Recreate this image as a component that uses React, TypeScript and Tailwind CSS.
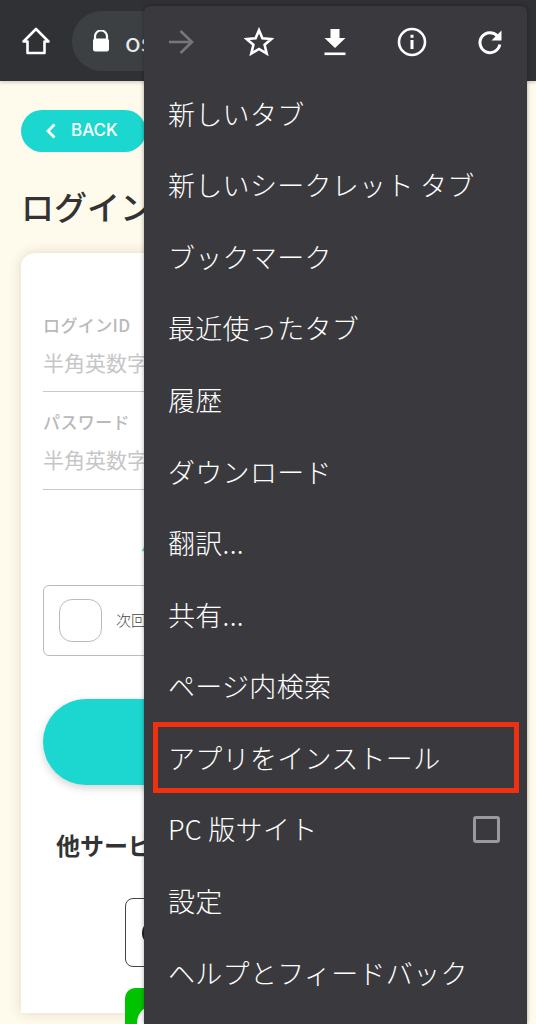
import React from "react";

const FONT = "[font-family:'Noto_Sans_CJK_JP','Noto_Sans',sans-serif]";

function Home() {
  return (
    <svg width="30" height="30" viewBox="0 0 30 30" fill="none" stroke="#fff" strokeWidth="2.6" strokeLinejoin="round" strokeLinecap="round">
      <path d="M15 3 L27.5 15.5 H23.5 V27 H6.5 V15.5 H2.5 Z" />
    </svg>
  );
}
function Lock() {
  return (
    <svg width="18" height="22" viewBox="0 0 18 22">
      <path d="M3 9 V6.5 A6 6 0 0 1 15 6.5 V9" fill="none" stroke="#fff" strokeWidth="2.2" />
      <rect x="1" y="8.5" width="16" height="13" rx="2.5" fill="#fff" />
    </svg>
  );
}
function Arrow() {
  return (
    <svg width="26" height="26" viewBox="0 0 26 26" fill="none" stroke="#77777a" strokeWidth="2.6">
      <path d="M1 13 H23" />
      <path d="M12.5 2 L24 13 L12.5 24" />
    </svg>
  );
}
function Star() {
  return (
    <svg width="30" height="30" viewBox="0 0 30 30" fill="none" stroke="#fff" strokeWidth="2.6" strokeLinejoin="miter">
      <path d="M15 3.2 L18.4 11.3 L27.4 12 L20.6 17.8 L22.7 26.6 L15 21.9 L7.3 26.6 L9.4 17.8 L2.6 12 L11.6 11.3 Z" />
    </svg>
  );
}
function Download() {
  return (
    <svg width="24" height="28" viewBox="0 0 24 28" fill="#fff">
      <path d="M7.5 1 H16.5 V10 H22.5 L12 20 L1.5 10 H7.5 Z" />
      <rect x="1.5" y="24.5" width="21" height="2.6" />
    </svg>
  );
}
function Info() {
  return (
    <svg width="30" height="30" viewBox="0 0 30 30" fill="none">
      <circle cx="15" cy="15" r="13" stroke="#fff" strokeWidth="2.6" />
      <rect x="13.5" y="13" width="3" height="9" fill="#fff" />
      <rect x="13.5" y="7.8" width="3" height="3" fill="#fff" />
    </svg>
  );
}
function Refresh() {
  return (
    <svg width="28" height="28" viewBox="0 0 28 28" fill="none">
      <path d="M21.6 8.2 A10 10 0 1 0 23.8 16.5" stroke="#fff" strokeWidth="3" />
      <path d="M25.5 2.5 V12.5 H15.5 Z" fill="#fff" />
    </svg>
  );
}

const items = [
  "新しいタブ",
  "新しいシークレット タブ",
  "ブックマーク",
  "最近使ったタブ",
  "履歴",
  "ダウンロード",
  "翻訳...",
  "共有...",
  "ページ内検索",
  "アプリをインストール",
  "PC 版サイト",
  "設定",
  "ヘルプとフィードバック",
];

export default function App() {
  return (
    <div className={`relative h-[1024px] w-[536px] overflow-hidden bg-[#fefaec] ${FONT}`}>
      <header className="flex h-[81px] items-center bg-[#303135] pl-[21px] shadow-[0_2px_3px_rgba(0,0,0,0.15)]">
        <Home />
        <div className="ml-[21px] flex h-[60px] w-[200px] items-center rounded-full bg-[#3c4043] pl-[20px]">
          <Lock />
          <span className="ml-[15px] text-[26px] text-[#e8eaed]">osaifu.com</span>
        </div>
      </header>

      <main className="px-[21px] pt-[29px]">
        <button className="flex h-[42px] w-[125px] items-center gap-[15px] rounded-full bg-[#1cd7d0] pl-[25px] text-[17px] font-medium text-white">
          <svg width="10" height="16" viewBox="0 0 10 16" fill="none" stroke="#fff" strokeWidth="2.8">
            <path d="M8.5 1.5 L2 8 L8.5 14.5" />
          </svg>
          <span className="[font-family:'Inter',sans-serif]">BACK</span>
        </button>
        <h1 className="mt-[29px] h-[50px] text-[33px] font-medium leading-[50px] text-[#333]">ログイン</h1>

        <section className="mt-[22px] h-[760px] rounded-t-[14px] bg-white px-[22px] pt-[60px] shadow-[0_0_12px_rgba(120,100,50,0.22)]">
          <p className="text-[17px] font-medium leading-[24px] tracking-[0.4px] text-[#b9b9b9]">ログインID</p>
          <p className="mt-[3px] h-[52px] border-b border-[#c8c8c8] pt-[6px] text-[21px] leading-[32px] text-[#c6c6c6]">半角英数字で入力</p>
          <p className="mt-[18px] text-[17px] font-medium leading-[24px] tracking-[0.4px] text-[#b9b9b9]">パスワード</p>
          <p className="mt-[3px] h-[53px] border-b border-[#c8c8c8] pt-[6px] text-[21px] leading-[32px] text-[#c6c6c6]">半角英数字で入力</p>
          <p className="mt-[41px] h-[26px] text-center text-[17px] leading-[26px] text-[#1cd7d0]">パスワードをお忘れの方はこちら</p>
          <div className="mt-[28px] flex h-[71px] items-center rounded-[6px] border border-[#bbbbbb] pl-[15px]">
            <span className="h-[43px] w-[43px] rounded-[13px] border border-[#bbbbbb]" />
            <span className="ml-[14px] text-[15px] font-light text-[#444]">次回から自動ログイン</span>
          </div>
          <button className="mt-[43px] block h-[86px] w-full rounded-full bg-[#1cd7d0] shadow-[0_3px_8px_rgba(0,0,0,0.18)]" />
          <p className="mt-[42px] pl-[13px] text-[24px] font-bold leading-[36px] text-[#333]">他サービスでログイン</p>
          <div className="ml-[82px] mt-[35px] flex h-[69px] w-[300px] items-center rounded-[8px] border border-[#444] pl-[16px]">
            <span className="h-[26px] w-[26px] rounded-full bg-[#222]" />
          </div>
          <div className="ml-[82px] mt-[21px] flex h-[69px] w-[300px] items-center rounded-[10px] bg-[#00c300] pl-[12px]">
            <span className="h-[36px] w-[36px] rounded-full bg-white" />
          </div>
        </section>
      </main>

      <nav className="absolute bottom-0 left-[144px] top-[6px] w-[383px] rounded-t-[6px] bg-[#3a3a3e] shadow-[0_0_4px_rgba(0,0,0,0.35)]">
        <div className="relative flex h-[72px] items-center justify-between pl-[24px] pr-[23px]">
          <Arrow />
          <Star />
          <Download />
          <Info />
          <Refresh />
        </div>
        <ul>
          {items.map((t) => {
            const install = t === "アプリをインストール";
            const pc = t === "PC 版サイト";
            return (
              <li
                key={t}
                className="relative flex h-[71.6px] items-center justify-between pl-[24px] pr-[27px] text-[27px] font-light tracking-[0.3px] text-white"
              >
                <span className="whitespace-pre">{t}</span>
                {pc && <span className="h-[27px] w-[27px] rounded-[3px] border-[3px] border-[#9a9a9a]" />}
                {install && (
                  <span className="absolute left-[9px] right-[8px] top-0 h-[71px] border-[5px] border-[#f03010]" />
                )}
              </li>
            );
          })}
        </ul>
      </nav>
    </div>
  );
}
